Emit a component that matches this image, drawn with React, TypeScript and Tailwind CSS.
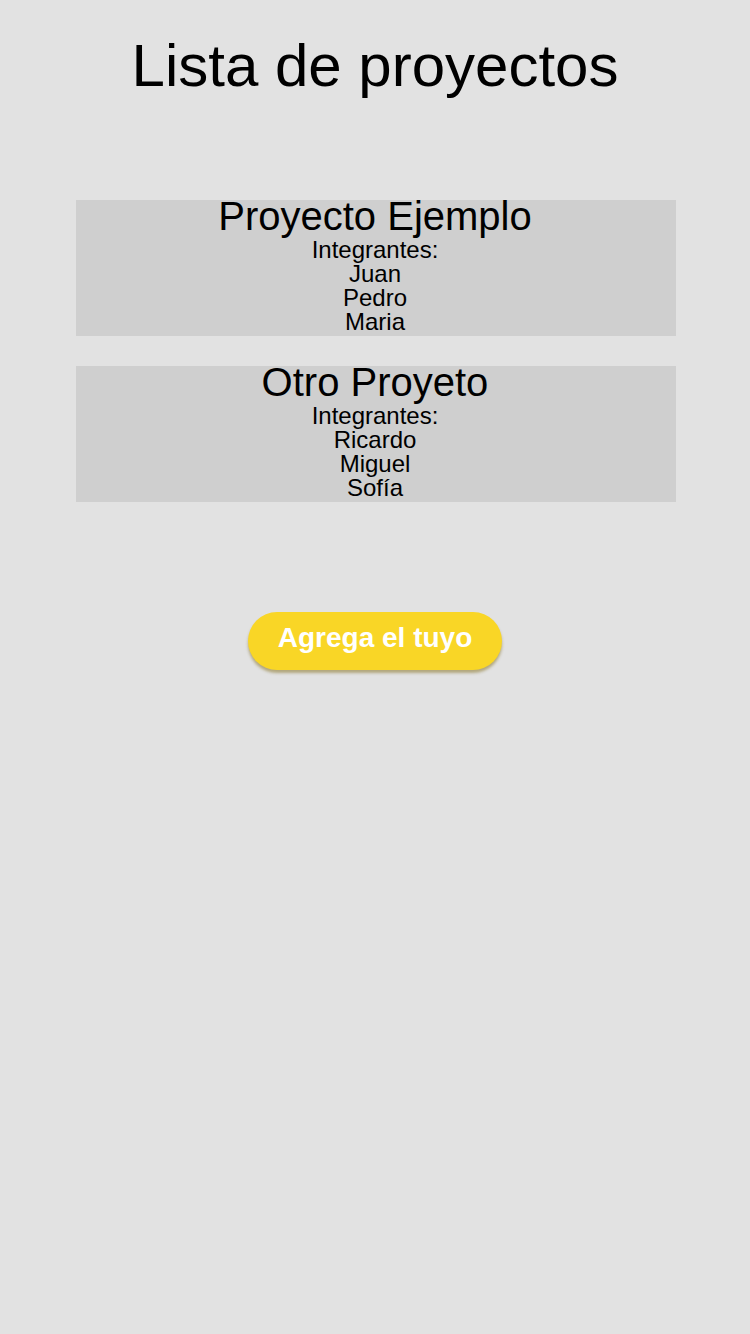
const projects = [
  { name: "Proyecto Ejemplo", members: ["Juan", "Pedro", "Maria"] },
  { name: "Otro Proyeto", members: ["Ricardo", "Miguel", "Sofía"] },
];

export default function App() {
  return (
    <div
      className="min-h-[1334px] w-full bg-[#e2e2e2] text-black flex flex-col items-center pt-[32px]"
      style={{ fontFamily: '"Liberation Sans", Arial, sans-serif' }}
    >
      <h1 className="text-[60px] leading-[68px] font-normal text-center">
        Lista de proyectos
      </h1>

      {/* Project cards */}
      <div className="mt-[100px] ml-[2px] w-[600px] flex flex-col gap-[30px]">
        {projects.map((project, index) => (
          <div key={index} className="bg-[#cfcfcf] text-center pb-[2px] pr-[2px]">
            <h2 className="text-[40px] leading-[32px] mb-[6px] font-normal">
              {project.name}
            </h2>
            <p className="text-[24px] leading-[24px]">Integrantes:</p>
            {project.members.map((member) => (
              <p key={member} className="text-[24px] leading-[24px]">
                {member}
              </p>
            ))}
          </div>
        ))}
      </div>

      <button className="mt-[110px] h-[58px] px-[30px] pt-[10px] rounded-full bg-[#f9d626] text-white text-[28px] leading-[32px] font-bold self-center flex items-start shadow-[0_3px_3px_rgba(120,95,0,0.45)]">
        Agrega el tuyo
      </button>
    </div>
  );
}
